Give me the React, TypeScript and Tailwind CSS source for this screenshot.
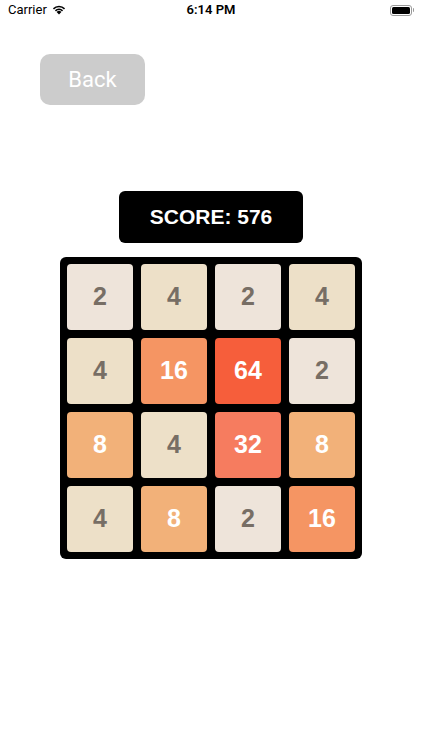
import React from 'react'

const board = [
  [2, 4, 2, 4],
  [4, 16, 64, 2],
  [8, 4, 32, 8],
  [4, 8, 2, 16],
]

function tileClass(v: number) {
  switch (v) {
    case 2:
      return 'bg-[#eee4da] text-[#776e65]'
    case 4:
      return 'bg-[#ede0c8] text-[#776e65]'
    case 8:
      return 'bg-[#f2b179] text-white'
    case 16:
      return 'bg-[#f59563] text-white'
    case 32:
      return 'bg-[#f67c5f] text-white'
    case 64:
      return 'bg-[#f65e3b] text-white'
    default:
      return 'bg-[#cdc1b4] text-white'
  }
}

function StatusBar() {
  return (
    <div className="relative flex h-[20px] items-center justify-between px-[8px] text-[13px] text-black">
      <div className="flex items-center gap-[5px]">
        <span>Carrier</span>
        <svg width="14" height="10" viewBox="0 0 14 10">
          <path d="M7 9.5 L4.6 7 A3.4 3.4 0 0 1 9.4 7 Z" fill="black" />
          <path d="M2.9 5.3 A5.8 5.8 0 0 1 11.1 5.3 L10 6.4 A4.3 4.3 0 0 0 4 6.4 Z" fill="black" />
          <path d="M0.9 3.3 A8.6 8.6 0 0 1 13.1 3.3 L12 4.4 A7.1 7.1 0 0 0 2 4.4 Z" fill="black" />
        </svg>
      </div>
      <span className="absolute left-1/2 -translate-x-1/2 font-semibold">6:14 PM</span>
      <div className="flex items-center">
        <div className="flex h-[11px] w-[22px] items-center rounded-[3px] border border-[#9a9a9a] p-[1px]">
          <div className="h-full w-full rounded-[1.5px] bg-black" />
        </div>
        <div className="ml-[1px] h-[4px] w-[1.5px] rounded-r bg-[#9a9a9a]" />
      </div>
    </div>
  )
}

export default function App() {
  return (
    <div
      className="h-[750px] w-[422px] bg-white"
      style={{ fontFamily: 'Roboto, "Liberation Sans", Arial, sans-serif' }}
    >
      <StatusBar />
      <div className="pl-[40px] pt-[34px]">
        <button className="flex h-[51px] w-[105px] items-center justify-center rounded-[10px] bg-[#cccccc] text-[22px] text-white">
          Back
        </button>
      </div>
      <div className="mt-[86px] flex justify-center">
        <div className="flex h-[52px] w-[184px] items-center justify-center rounded-[6px] bg-black text-[21px] font-bold text-white" style={{ fontFamily: '"Liberation Sans", Arial, sans-serif' }}>
          SCORE: 576
        </div>
      </div>
      <div className="mt-[14px] flex justify-center">
        <div className="grid grid-cols-4 gap-[8px] rounded-[6px] bg-black p-[7px]">
          {board.flat().map((v, i) => (
            <div
              key={i}
              className={`flex h-[66px] w-[66px] items-center justify-center rounded-[4px] text-[25px] font-bold ${tileClass(v)}`}
              style={{ fontFamily: '"Liberation Sans", Arial, sans-serif' }}
            >
              {v}
            </div>
          ))}
        </div>
      </div>
    </div>
  )
}
